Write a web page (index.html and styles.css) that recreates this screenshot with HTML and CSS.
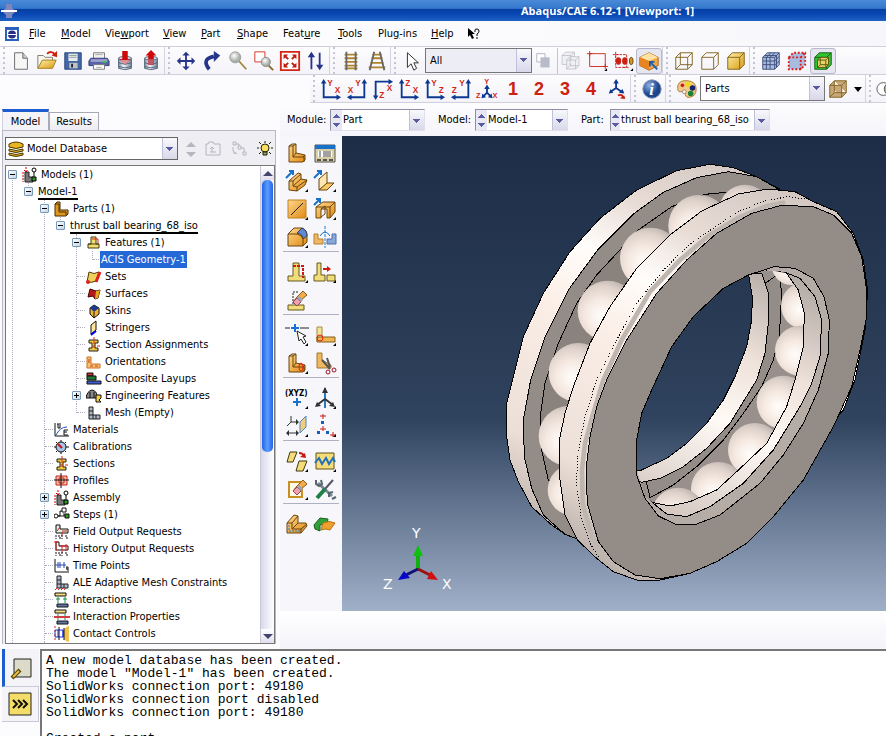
FILE: index.html
```
<!DOCTYPE html>
<html lang="en">

<head>
    <meta charset="UTF-8" />
    <meta name="viewport" content="width=device-width, initial-scale=1.0" />
    <title>Abaqus/CAE 6.12-1 [Viewport: 1]</title>
    <link rel="stylesheet" href="styles.css">
</head>

<body>
    <svg class="sprite" aria-hidden="true">
        <defs>
            <linearGradient id="gold" x2="1" y2="1">
                <stop offset="0" stop-color="#fff0a8" />
                <stop offset="1" stop-color="#d99a10" />
            </linearGradient>
            <linearGradient id="orange" x2="1" y2="1">
                <stop offset="0" stop-color="#ffd890" />
                <stop offset="1" stop-color="#e08a10" />
            </linearGradient>
            <linearGradient id="steel" x2="1" y2="0">
                <stop offset="0" stop-color="#7a8ea6" />
                <stop offset=".4" stop-color="#eef6ff" />
                <stop offset="1" stop-color="#6e8299" />
            </linearGradient>
            <radialGradient id="lens" cx=".4" cy=".35">
                <stop offset="0" stop-color="#fff" />
                <stop offset="1" stop-color="#aab0a8" />
            </radialGradient>
            <radialGradient id="info" cx=".35" cy=".3">
                <stop offset="0" stop-color="#8fb0e0" />
                <stop offset="1" stop-color="#1c4590" />
            </radialGradient>
        </defs>
        <symbol id="cube" viewBox="0 0 24 24">
            <path d="M3 8 8 3h13v13l-5 5H3zM3 8h13v13M16 8l5-5" />
        </symbol>
        <symbol id="wire" viewBox="0 0 24 24">
            <path d="M3 8 8 3h13v13l-5 5H3zM3 8h13v13M16 8l5-5M8 3v13h13M8 16l-5 5" />
        </symbol>
        <symbol id="more" viewBox="0 0 24 24">
            <path d="M23 20v3h-3z" fill="#000" />
        </symbol>
        <symbol id="ell" viewBox="0 0 24 24">
            <path d="M4 5 7 3h4v9l9 2v5l-2 2H4z" fill="url(#orange)" stroke="#6b4510" />
            <path d="M4 5h4v11h11v5M8 5l3-2M8 16l3-4M18 16l2-2" fill="none" stroke="#6b4510" />
        </symbol>
        <symbol id="mesh" viewBox="0 0 16 16">
            <path d="M3 2h4v8h7v4H3zM3 6h4M3 10h4v4M10 10v4" fill="#aeb8c8" stroke="#222" />
        </symbol>
        <symbol id="assembly" viewBox="0 0 16 16">
            <path d="M3 5h4v5h4v5H3z" fill="#777" stroke="#222" />
            <path d="M1 5v10M4 0v5M2 3l2 2 2-2" stroke="#c00" fill="none" stroke-dasharray="2 1" />
            <circle cx="12" cy="3" r="2" fill="#fff" stroke="#000" />
            <path d="M12 5v5" stroke="#000" />
            <path d="M10 10h4v4h-4z" fill="#2a9a2a" stroke="#000" />
        </symbol>
        <symbol id="beam" viewBox="0 0 16 16">
            <path d="M3 3h9v3h-3v5h3v3H3v-3h3V6H3z" fill="#f4c63c" stroke="#222" />
            <path d="M8 0v12M11 9h4" stroke="#d22" stroke-dasharray="3 1" />
        </symbol>
        <symbol id="eraser" viewBox="0 0 24 24">
            <path d="m8 14 4-5 6-6 4 4-7 6-4 4z" fill="#f2ac48" stroke="#8a5a20" />
            <path d="m8 14 4-4 4 4-4 4z" fill="#f0a0b4" stroke="#944" />
            <path d="m12 10 2-2 4 4-2 2z" fill="#9aa4b4" />
        </symbol>
    </svg>

    <header class="titlebar">
        <svg class="app-mark" viewBox="0 0 18 18">
            <path d="M6 2h6v4l4 3-4 4v3H6v-3L2 9l4-3z" fill="#7e86bc" />
            <path d="M1 9h16" stroke="#fff" stroke-width="2" />
        </svg>
        <h1>Abaqus/CAE 6.12-1 [Viewport: 1]</h1>
    </header>

    <nav class="menubar">
        <svg class="doc-mark" viewBox="0 0 14 14">
            <path d="M0 0h14v14H0z" fill="#2b62bd" />
            <path d="M2 3h10v9H2z" fill="#fff" />
            <ellipse cx="7" cy="7.500" rx="4" ry="4" fill="#2a2f86" />
            <path d="M2 7.500h10" stroke="#fff" />
        </svg>
        <button class="m-file"><u>F</u>ile</button>
        <button class="m-model"><u>M</u>odel</button>
        <button class="m-viewport">Vie<u>w</u>port</button>
        <button class="m-view"><u>V</u>iew</button>
        <button class="m-part"><u>P</u>art</button>
        <button class="m-shape"><u>S</u>hape</button>
        <button class="m-feature">Feat<u>u</u>re</button>
        <button class="m-tools"><u>T</u>ools</button>
        <button class="m-plugins">Plu<u>g</u>-ins</button>
        <button class="m-help"><u>H</u>elp</button>
        <button class="m-what" aria-label="What's this"><svg viewBox="0 0 14 14">
                <path d="M1 1v9l2-2 2 4 2-1-2-4h3z" />
                <path d="M8 5V3q0-1 2-1t2 2-2 3v2M10 10v2" fill="none" stroke="#000" />
            </svg></button>
    </nav>

    <div class="toolbar">
        <i class="grip first"></i>
        <button aria-label="New"><svg viewBox="0 0 24 24">
                <path d="M5 3h9l5 6v12H5z" fill="#f6f6f4" stroke="#666" />
                <path d="M14 3v6h5" fill="#ccc" stroke="#666" />
            </svg></button>
        <button aria-label="Open"><svg viewBox="0 0 24 24">
                <path d="M2 20V6h6l2 2h8v5" fill="#f8f6ee" stroke="#776" />
                <path d="m2 20 5-9h15l-4 9z" fill="url(#gold)" stroke="#a07818" />
                <path d="M12 4q5-4 9 1" fill="none" stroke="#d22010" stroke-width="2" />
                <path d="M23 1v7l-6-2z" fill="#d22010" />
            </svg></button>
        <button aria-label="Save"><svg viewBox="0 0 24 24">
                <path d="M3 3h18v18H3z" fill="#4467a4" stroke="#2a4680" />
                <path d="M7 4h10v8H7z" fill="#e8ecec" />
                <path d="M8 6h8M8 8h8" stroke="#899" />
                <path d="M8 14h9v6H8z" fill="#bcc4c4" />
                <path d="M10 15h2v4h-2z" fill="#223" />
            </svg></button>
        <button aria-label="Print"><svg viewBox="0 0 24 24">
                <path d="M6 3h12v7H6z" fill="#f2f2ee" stroke="#777" />
                <path d="M3 9h18l2 3v5H1v-5z" fill="#5a62a6" stroke="#333a80" />
                <path d="M3 10h18v3H3z" fill="#9ba2ce" />
                <path d="M6 16h12v5H6z" fill="#fff" stroke="#777" />
                <path d="M8 5h8M9 19h6" stroke="#aaa" />
                <path d="M16 13h4" stroke="#3c4" stroke-width="2" />
            </svg></button>
        <button aria-label="Save model database"><svg viewBox="0 0 24 24">
                <path d="M5 9v11q7 3 14 0V9z" fill="url(#steel)" stroke="#567" />
                <ellipse cx="12" cy="9" rx="7" ry="2" fill="#cdd8e4" stroke="#567" />
                <path d="M5 14q7 3 14 0M5 18q7 3 14 0" fill="none" stroke="#567" />
                <path d="M9 1h6v9h3l-6 6-6-6h3z" fill="#cc0808" />
                <path d="M7 11h10l-5 5z" fill="#e09098" />
            </svg></button>
        <button aria-label="Load model database"><svg viewBox="0 0 24 24">
                <path d="M5 9v11q7 3 14 0V9z" fill="url(#steel)" stroke="#567" />
                <ellipse cx="12" cy="9" rx="7" ry="2" fill="#cdd8e4" stroke="#567" />
                <path d="M5 14q7 3 14 0M5 18q7 3 14 0" fill="none" stroke="#567" />
                <path d="m12 0 6 6h-3v10H9V6H6z" fill="#cc0808" />
                <path d="M9 10h6v6H9z" fill="#c05868" />
            </svg></button>
        <i class="grip"></i>
        <button aria-label="Pan"><svg viewBox="0 0 24 24" fill="#26348c">
                <path d="M11 5h2v14h-2zM5 11h14v2H5z" />
                <path d="m12 2 4 4H8zM12 22l4-4H8zM2 12l4-4v8zM22 12l-4-4v8z" />
            </svg></button>
        <button aria-label="Rotate"><svg viewBox="0 0 24 24">
                <path d="M9 21Q0 10 14 7" fill="none" stroke="#26348c" stroke-width="4" />
                <path d="M14 1v12l7-7z" fill="#26348c" />
            </svg></button>
        <button aria-label="Zoom"><svg viewBox="0 0 24 24">
                <path d="m13 12 8 9" stroke="#a8843c" stroke-width="2" />
                <circle cx="9" cy="8" r="6" fill="url(#lens)" stroke="#999" />
            </svg></button>
        <button aria-label="Box zoom"><svg viewBox="0 0 24 24">
                <path d="M2 2h11v11H2z" fill="#fff" stroke="#d03020" />
                <path d="m16 16 6 6" stroke="#8a6a30" stroke-width="2" />
                <circle cx="14" cy="13" r="5" fill="url(#lens)" stroke="#888" />
            </svg></button>
        <button aria-label="Fit view"><svg viewBox="0 0 24 24">
                <path d="M2 2h20v20H2z" fill="#fff" stroke="#d42414" stroke-width="2" />
                <path d="m6 6 4 4M18 6l-4 4M6 18l4-4M18 18l-4-4" stroke="#c41c10" stroke-width="2" />
                <path d="M5 5h5l-5 5zM19 5h-5l5 5zM5 19h5l-5-5zM19 19h-5l5-5z" fill="#c41c10" />
            </svg></button>
        <button aria-label="Cycle views"><svg viewBox="0 0 24 24" fill="#26348c">
                <path d="M6 6h2v15H6zM15 3h2v15h-2z" />
                <path d="m7 2 4 6H3zM16 22l4-6h-8z" />
            </svg></button>
        <i class="grip"></i>
        <button aria-label="Perspective off"><svg viewBox="0 0 24 24" fill="none">
                <path d="M5 5h14M5 9h14M5 13h14M5 17h14M5 20h14" stroke="#b08428" stroke-width="2" />
                <path d="M7 2v20M17 2v20" stroke="#666" stroke-width="2" />
            </svg></button>
        <button aria-label="Perspective on"><svg viewBox="0 0 24 24" fill="none">
                <path d="M7 5h10M6 9h12M5 14h14M3 19h18" stroke="#b08428" stroke-width="2" />
                <path d="M9 2 4 22M15 2l5 20" stroke="#666" stroke-width="2" />
            </svg></button>
        <i class="grip"></i>
        <button aria-label="Select"><svg viewBox="0 0 24 24">
                <path d="M7 3v16l4-4 3 7 3-2-3-6h5z" fill="#fff" stroke="#222" />
            </svg></button>
        <select class="combo filter" aria-label="Selection filter">
            <option>All</option>
        </select>
        <button class="divided" aria-label="Highlight"><svg viewBox="0 0 24 24">
                <path d="M3 4h9v9H3z" fill="#fff" stroke="#aeb2c0" />
                <path d="M7 8h10v11H7z" fill="#b8bcc8" />
            </svg></button>
        <button aria-label="Drag mode"><svg class="muted" viewBox="0 0 24 24">
                <use href="#cube" width="18" height="18" />
                <use href="#wire" x="5" y="5" width="18" height="18" />
            </svg></button>
        <button aria-label="Drag rectangle"><svg viewBox="0 0 24 24" fill="none" stroke="#c8281c">
                <path d="M4 4h17v14H4zM1 4h6M4 1v6M18 18h6M21 15v6" />
                <use href="#more" stroke="none" />
            </svg></button>
        <button aria-label="Entities"><svg viewBox="0 0 24 24">
                <path d="M4 5h12v14H4zM1 5h6M4 2v6M12 19h6" fill="none" stroke="#c8281c" stroke-dasharray="3 1" />
                <ellipse cx="7" cy="12" rx="3" ry="4" fill="#cc2010" />
                <ellipse cx="14" cy="12" rx="3" ry="4" fill="#cc2010" />
                <ellipse cx="21" cy="12" rx="2" ry="4" fill="#d89a20" stroke="#641" />
                <use href="#more" />
            </svg></button>
        <button class="pressed" aria-label="Select from exterior"><svg viewBox="0 0 24 24">
                <path d="m2 8 10-5 10 5v9l-10 5-10-5z" fill="#f2a848" stroke="#a06010" />
                <path d="m2 8 10-5 10 5-10 4z" fill="#ffe2a4" />
                <path d="M2 8v9l10 5V12z" fill="#e88420" />
                <path d="m21 21-8-8M13 18v-5h5" fill="none" stroke="#1c60b0" stroke-width="2" />
            </svg></button>
        <i class="grip"></i>
        <button aria-label="Wireframe"><svg class="brown" viewBox="0 0 24 24">
                <use href="#wire" />
            </svg></button>
        <button aria-label="Hidden line"><svg class="brown" viewBox="0 0 24 24">
                <use href="#cube" />
            </svg></button>
        <button aria-label="Shaded"><svg class="brown" viewBox="0 0 24 24">
                <use href="#cube" fill="url(#gold)" />
            </svg></button>
        <i class="grip"></i>
        <button aria-label="Mesh edges"><svg class="slate" viewBox="0 0 24 24">
                <path class="body" d="M3 8 8 3h13v13l-5 5H3z" />
                <path d="M3 8h13v13M7 8v13M11 8v13M3 12h13M3 16h13M7 8l5-5M11 8l5-5M5 6h13v13M16 8l5-5M16 12l5-5M16 17l5-5" />
            </svg></button>
        <button aria-label="Seeds"><svg class="slate seeds" viewBox="0 0 24 24">
                <path class="body" d="M3 8 8 3h13v13l-5 5H3z" />
                <path d="M3 8h13v13M16 8l5-5" />
            </svg></button>
        <button class="pressed" aria-label="Reference representation"><svg viewBox="0 0 24 24">
                <path d="M3 8 8 3h13v13l-5 5H3zM3 8h13v13M16 8l5-5" fill="#30c430" stroke="#155c15" />
                <path d="m6 11 3-3h9v8l-3 3H6z" fill="#e4d468" stroke="#5c5010" />
                <path d="M6 11h9v8M15 11l3-3M9 8v8h9M9 16l-3 3" fill="none" stroke="#5c5010" />
            </svg></button>
    </div>

    <div class="toolbar views">
        <i class="grip first"></i>
        <button aria-label="Front view"><svg class="axes" viewBox="0 0 24 24">
                <path class="line" d="M4 5v16h16" />
                <path d="m4 1 3 5H1zM23 21l-5-3v6z" /><text x="8" y="9">Y</text><text x="16" y="16">X</text>
            </svg></button>
        <button aria-label="Back view"><svg class="axes" viewBox="0 0 24 24">
                <path class="line" d="M20 5v16H5" />
                <path d="m20 1 3 5h-6zM1 21l5-3v6z" /><text x="10" y="9">Y</text><text x="2" y="16">X</text>
            </svg></button>
        <button aria-label="Top view"><svg class="axes" viewBox="0 0 24 24">
                <path class="line" d="M4 20V4h15" />
                <path d="m4 24 3-5H1zM23 4l-5-3v6z" /><text x="16" y="14">X</text><text x="8" y="22">Z</text>
            </svg></button>
        <button aria-label="Bottom view"><svg class="axes" viewBox="0 0 24 24">
                <path class="line" d="M4 5v16h16" />
                <path d="m4 1 3 5H1zM23 21l-5-3v6z" /><text x="8" y="9">Z</text><text x="16" y="16">X</text>
            </svg></button>
        <button aria-label="Left view"><svg class="axes" viewBox="0 0 24 24">
                <path class="line" d="M4 5v16h16" />
                <path d="m4 1 3 5H1zM23 21l-5-3v6z" /><text x="8" y="9">Y</text><text x="16" y="16">Z</text>
            </svg></button>
        <button aria-label="Right view"><svg class="axes" viewBox="0 0 24 24">
                <path class="line" d="M20 5v16H5" />
                <path d="m20 1 3 5h-6zM1 21l5-3v6z" /><text x="10" y="9">Y</text><text x="2" y="16">Z</text>
            </svg></button>
        <button aria-label="Isometric view"><svg class="axes iso" viewBox="0 0 24 24">
                <path class="line" d="M12 11v5l-4 4M12 16l4 4" />
                <path d="m12 7 3 5H9zM6 22l1-5 4 4zM18 22l-1-5-4 4z" /><text x="9" y="7">Y</text><text x="0" y="22">Z</text><text x="18" y="22">X</text>
            </svg></button>
        <button class="num">1</button>
        <button class="num">2</button>
        <button class="num">3</button>
        <button class="num">4</button>
        <button aria-label="Save view"><svg class="axes" viewBox="0 0 24 24">
                <path class="line" d="M11 4v7l-6 4M11 11l6 4" />
                <path d="m11 1 3 5H8zM3 17l2-5 3 4zM20 17l-2-5-4 4z" />
                <path d="M13 19q5-2 6 3" fill="none" stroke="#c41c10" stroke-width="2" />
                <path d="m21 23-6-1 5-3z" fill="#c41c10" />
            </svg></button>
        <i class="grip"></i>
        <button aria-label="Query information"><svg viewBox="0 0 24 24">
                <circle cx="12" cy="12" r="10" fill="url(#info)" stroke="#8494b4" />
                <text class="info-i" x="9" y="18">i</text>
            </svg></button>
        <i class="grip"></i>
        <button aria-label="Color code"><svg viewBox="0 0 24 24">
                <path d="M2 8Q4 2 13 3t9 9-7 9q-4 1-5-3t-5-3-3-7z" fill="#f0c888" stroke="#a87830" />
                <circle cx="7" cy="8" r="2" fill="#d01818" />
                <circle cx="13" cy="7" r="3" fill="#f0d820" />
                <circle cx="18" cy="11" r="3" fill="#182070" />
                <circle cx="16" cy="17" r="3" fill="#188038" />
                <circle cx="9" cy="15" r="2" fill="#fff" stroke="#987" />
            </svg></button>
        <select class="combo color-by" aria-label="Color by">
            <option>Parts</option>
        </select>
        <button aria-label="Translucency"><svg class="brown tan" viewBox="0 0 24 24">
                <use href="#wire" />
            </svg></button>
        <button class="narrow" aria-label="Translucency options"><svg viewBox="0 0 14 24">
                <path d="M3 10h8l-4 5z" />
            </svg></button>
        <i class="grip"></i>
        <button aria-label="Replace"><svg viewBox="0 0 24 24">
                <circle cx="8" cy="12" r="7" fill="#fff" stroke="#555" />
                <circle cx="16" cy="12" r="7" fill="#f0a030" stroke="#555" />
            </svg></button>
    </div>

    <main class="workspace">
        <aside class="side">
            <div class="tabs">
                <button class="tab active">Model</button>
                <button class="tab">Results</button>
            </div>
            <div class="panel">
                <div class="db-row">
                    <span class="db-pick">
                        <svg viewBox="0 0 16 16">
                            <path d="M1 3q7-4 14 0v3q-7 3-14 0zM1 8q7 3 14 0v2q-7 3-14 0zM1 12q7 3 14 0v2q-7 3-14 0z" fill="#e8b420" stroke="#4a3600" />
                        </svg>
                        <select class="combo" aria-label="Database">
                            <option>Model Database</option>
                        </select>
                    </span>
                    <button aria-label="Up or down"><svg viewBox="0 0 16 16" fill="#b4b6c0">
                            <path d="m8 1 5 5H3zM8 16l5-5H3z" />
                        </svg></button>
                    <button aria-label="Parent folder"><svg viewBox="0 0 16 16" fill="none" stroke="#b4b6c0">
                            <path d="M1 14V3h2l1-2h4l1 2h6v11zM5 11h6M7 11V6M5 8l2-2 2 2" />
                        </svg></button>
                    <button aria-label="Expand"><svg viewBox="0 0 16 16" fill="none" stroke="#b4b6c0">
                            <path d="M2 1h3v3H2zM7 5h3v3H7zM12 11h3v3h-3zM5 3h3v2M10 7h3v4M2 6v4l4 3M2 12h3" />
                        </svg></button>
                    <button aria-label="Tips"><svg viewBox="0 0 16 16">
                            <circle cx="8" cy="7" r="4" fill="#f8e060" stroke="#220" />
                            <path d="M6 11h4v3H6z" fill="#8a7" stroke="#220" />
                            <path d="M0 7h2M14 7h2M2 1l2 2M14 1l-2 2M8 0v2M2 13l2-2M14 13l-2-2" stroke="#220" />
                        </svg></button>
                </div>
                <div class="tree-box">
                    <ul class="tree">
                        <li>
                            <div class="row"><button class="toggle open" aria-label="Collapse"></button><svg viewBox="0 0 16 16"><use href="#assembly" /></svg><span>Models (1)</span></div>
                            <ul>
                                <li>
                                    <div class="row"><button class="toggle open" aria-label="Collapse"></button><span class="current">Model-1</span></div>
                                    <ul>
                                        <li>
                                            <div class="row"><button class="toggle open" aria-label="Collapse"></button><svg viewBox="0 0 16 16"><path d="M1 3 3 1h3v8h8v4l-2 2H1z" fill="#e0981c" stroke="#4a2c00" /><path d="M1 3h4v8h7v3" fill="none" stroke="#4a2c00" /></svg><span>Parts (1)</span></div>
                                            <ul>
                                                <li>
                                                    <div class="row"><button class="toggle open" aria-label="Collapse"></button><span class="current">thrust ball bearing_68_iso</span></div>
                                                    <ul>
                                                        <li>
                                                            <div class="row"><button class="toggle open" aria-label="Collapse"></button><svg viewBox="0 0 16 16"><path d="M5 2h5v7h3v4H2V9h3zM2 9h11" fill="#f0dc70" stroke="#443c10" /><path d="M6 4h6v4" fill="none" stroke="#d22" /></svg><span>Features (1)</span></div>
                                                            <ul>
                                                                <li>
                                                                    <div class="row leaf"><i></i><span class="selected">ACIS Geometry-1</span></div>
                                                                </li>
                                                            </ul>
                                                        </li>
                                                        <li>
                                                            <div class="row leaf"><i></i><svg viewBox="0 0 16 16"><path d="M3 3q5 3 10 0l-3 9q-4 2-9 1z" fill="#f0d058" stroke="#4a3c00" /><path d="m14 3-4 10" stroke="#e02020" stroke-width="3" /><circle cx="2" cy="13" r="2" fill="#e02020" /></svg><span>Sets</span></div>
                                                        </li>
                                                        <li>
                                                            <div class="row leaf"><i></i><svg viewBox="0 0 16 16"><path d="m4 3 6 2 4-1-2 8-3 1-2-3-5 1z" fill="#b81818" stroke="#400" /><path d="m10 5 4-1-2 8-3 1z" fill="#e0a820" /></svg><span>Surfaces</span></div>
                                                        </li>
                                                        <li>
                                                            <div class="row leaf"><i></i><svg viewBox="0 0 16 16"><path d="m8 2 5 3v6l-5 4-4-4V5z" fill="#f0b030" stroke="#111" /><path d="m8 2 5 3-5 4-4-4z" fill="#22388c" /><path d="M8 9v6" stroke="#111" /></svg><span>Skins</span></div>
                                                        </li>
                                                        <li>
                                                            <div class="row leaf"><i></i><svg viewBox="0 0 16 16"><path d="m5 5 5-4v9l-5 4z" fill="#ffe69c" stroke="#111" /><path d="m5 15 5-4" stroke="#00f" stroke-width="2" /></svg><span>Stringers</span></div>
                                                        </li>
                                                        <li>
                                                            <div class="row leaf"><i></i><svg viewBox="0 0 16 16"><use href="#beam" /></svg><span>Section Assignments</span></div>
                                                        </li>
                                                        <li>
                                                            <div class="row leaf"><i></i><svg viewBox="0 0 16 16"><path d="M1 3h4v7h9v4H1z" fill="#f8c078" stroke="#c87020" /><path d="M3 5v4M4 12h3M9 12h3" stroke="#c04010" /></svg><span>Orientations</span></div>
                                                        </li>
                                                        <li>
                                                            <div class="row leaf"><i></i><svg viewBox="0 0 16 16"><path d="M1 2h6v3H1z" fill="#d03030" stroke="#111" /><path d="M1 5h9v4H1z" fill="#207838" stroke="#111" /><path d="M1 10h14v3H1z" fill="#4060d8" stroke="#111" /></svg><span>Composite Layups</span></div>
                                                        </li>
                                                        <li>
                                                            <div class="row"><button class="toggle" aria-label="Expand"></button><svg viewBox="0 0 16 16"><path d="M0 10q1-7 6-8 5 1 5 6v2zM4 4v6M8 4v6" fill="#888" stroke="#111" /><path d="M10 7h5v3l-2 2 2 2h-5z" fill="#f4cc48" stroke="#111" /></svg><span>Engineering Features</span></div>
                                                        </li>
                                                        <li>
                                                            <div class="row leaf"><i></i><svg viewBox="0 0 16 16"><use href="#mesh" /></svg><span>Mesh (Empty)</span></div>
                                                        </li>
                                                    </ul>
                                                </li>
                                            </ul>
                                        </li>
                                        <li>
                                            <div class="row leaf"><i></i><svg viewBox="0 0 16 16"><path d="M1 1v13h14M3 2h4M4 2v4h2V3M10 8h4M10 10h3M10 13h4M10 8v5" fill="none" stroke="#111" /><path d="M2 13q4-8 11-8" fill="none" stroke="#2850c0" /></svg><span>Materials</span></div>
                                        </li>
                                        <li>
                                            <div class="row leaf"><i></i><svg viewBox="0 0 16 16"><circle cx="7" cy="8" r="5" fill="#a8c4e8" stroke="#111" /><path d="m4 5 4 4" stroke="#c01010" stroke-width="2" /><path d="M7 1v2M0 8h2M12 8h3M7 13v2M2 3l1 1M12 3l-1 1M2 13l1-1M12 13l-1-1" stroke="#111" /></svg><span>Calibrations</span></div>
                                        </li>
                                        <li>
                                            <div class="row leaf"><i></i><svg viewBox="0 0 16 16"><use href="#beam" /></svg><span>Sections</span></div>
                                        </li>
                                        <li>
                                            <div class="row leaf"><i></i><svg viewBox="0 0 16 16"><path d="M2 3h11v9H2zM5 5h5v5H5z" fill="#f8c0a0" stroke="#c82020" /><path d="M7 0v15M0 7h15" stroke="#111" /></svg><span>Profiles</span></div>
                                        </li>
                                        <li>
                                            <div class="row"><button class="toggle" aria-label="Expand"></button><svg viewBox="0 0 16 16"><use href="#assembly" /></svg><span>Assembly</span></div>
                                        </li>
                                        <li>
                                            <div class="row"><button class="toggle" aria-label="Expand"></button><svg viewBox="0 0 16 16"><path d="M4 9h2V4h3M10 6v3h2M4 9h6" fill="none" stroke="#111" /><circle cx="2" cy="9" r="2" fill="#fff" stroke="#111" /><path d="M8 1h4v4H8z" fill="#fff" stroke="#111" /><path d="M11 7h4v4h-4z" fill="#2a9a2a" stroke="#111" /></svg><span>Steps (1)</span></div>
                                        </li>
                                        <li>
                                            <div class="row leaf"><i></i><svg viewBox="0 0 16 16"><path d="M2 1h4v4h8v4H2z" fill="#e0f0e0" stroke="#111" /><path d="M3 7 6 3M8 7h5M8 8v4" stroke="#c22" /><path d="M2 11v4M4 12h2v3M8 11v4M11 12h2v3" fill="none" stroke="#111" stroke-dasharray="2 1" /></svg><span>Field Output Requests</span></div>
                                        </li>
                                        <li>
                                            <div class="row leaf"><i></i><svg viewBox="0 0 16 16"><path d="M2 1h3v4h9v4H2z" fill="#fff" stroke="#111" /><path d="M0 1h4M2 0v10M5 5h9M12 3v7M8 4v8" stroke="#d22" /><path d="M2 11v4M4 12h2v3M8 11v4M11 12h2v3" fill="none" stroke="#111" stroke-dasharray="2 1" /></svg><span>History Output Requests</span></div>
                                        </li>
                                        <li>
                                            <div class="row leaf"><i></i><svg viewBox="0 0 16 16"><path d="M1 1v13h14M13 8v4h2M12 10h3" fill="none" stroke="#111" /><path d="M1 7h11M4 4v6M6 4v6M10 4v6" stroke="#2848b0" /></svg><span>Time Points</span></div>
                                        </li>
                                        <li>
                                            <div class="row leaf"><i></i><svg viewBox="0 0 16 16"><use href="#mesh" y="-1" /><path d="m1 15 2-2M4 15l2-2M7 15l2-2M10 15l2-2" stroke="#d22" /></svg><span>ALE Adaptive Mesh Constraints</span></div>
                                        </li>
                                        <li>
                                            <div class="row leaf"><i></i><svg viewBox="0 0 16 16"><path d="M1 1h11v3H1z" fill="#f8e080" stroke="#111" /><path d="M3 12h11v3H3z" fill="#6078a8" stroke="#111" /><path d="M4 5v6M11 5v6M2 7h4M9 7h4" stroke="#189048" /></svg><span>Interactions</span></div>
                                        </li>
                                        <li>
                                            <div class="row leaf"><i></i><svg viewBox="0 0 16 16"><path d="M1 1h11v3H1z" fill="#f8e080" stroke="#111" /><path d="M3 12h11v3H3z" fill="#6078a8" stroke="#111" /><path d="M4 5v6M11 5v6" stroke="#189048" /><path d="M0 8h16" stroke="#d04040" stroke-width="2" /></svg><span>Interaction Properties</span></div>
                                        </li>
                                        <li>
                                            <div class="row leaf"><i></i><svg viewBox="0 0 16 16"><path d="M15 0q-6 1-6 8t6 8z" fill="#f0c050" /><path d="M1 4h8v7H1zM4 4v7M9 4v7" fill="none" stroke="#2030e0" /><path d="M1 0v16" stroke="#d22" stroke-dasharray="2 2" /><path d="M5 1v13M10 2v12" stroke="#111" /></svg><span>Contact Controls</span></div>
                                        </li>
                                        <li>
                                            <div class="row leaf"><i></i><svg viewBox="0 0 16 16"><path d="m4 2 4-2M6 5l4-3" stroke="#d22" stroke-width="2" /></svg></div>
                                        </li>
                                    </ul>
                                </li>
                            </ul>
                        </li>
                        <li></li>
                    </ul>
                    <div class="scrollbar">
                        <button class="up" aria-label="Scroll up"></button>
                        <div class="thumb"></div>
                        <button class="down" aria-label="Scroll down"></button>
                    </div>
                </div>
            </div>
        </aside>

        <section class="stage">
            <div class="context">
                <label for="module">Module:</label>
                <span class="spin module"><i></i><select class="combo" id="module">
                        <option>Part</option>
                    </select></span>
                <label for="model">Model:</label>
                <span class="spin model"><i></i><select class="combo" id="model">
                        <option>Model-1</option>
                    </select></span>
                <label for="part">Part:</label>
                <span class="spin part"><i></i><select class="combo" id="part">
                        <option>thrust ball bearing_68_iso</option>
                    </select></span>
            </div>
            <div class="canvas-row">
                <div class="toolbox">
                    <div class="tools">
                        <button aria-label="Create part"><svg viewBox="0 0 24 24"><use href="#ell" /></svg></button>
                        <button aria-label="Part manager"><svg viewBox="0 0 24 24">
                                <path d="M2 4h20v17H2z" fill="#d8d0a4" stroke="#555" />
                                <path d="M2 4h20v4H2z" fill="#1870c8" />
                                <path d="M5 10h14v6H5z" fill="#fff" />
                                <path d="M6 11h2M6 13h2M6 15h2M10 11h8M10 13h8M10 15h8" stroke="#444" />
                                <path d="M4 19h4M10 19h4M16 19h4" stroke="#555" stroke-width="2" />
                            </svg></button>
                        <button aria-label="Solid extrude"><svg viewBox="0 0 24 24">
                                <path d="M4 12 13 4l3 1v5l6 1-2 5-8 6-8-1z" fill="url(#orange)" stroke="#6b4510" />
                                <path d="M4 12h4v5l4 1v4M8 12l8-7M8 17l8-7M12 18l10-7" fill="none" stroke="#6b4510" />
                                <path d="m1 9 7-7M4 2h4v4" fill="none" stroke="#1870c8" stroke-width="2" />
                                <use href="#more" />
                            </svg></button>
                        <button aria-label="Shell extrude"><svg viewBox="0 0 24 24">
                                <path d="m6 10 8-7v12l-8 6z" fill="#ffe8b0" stroke="#6b4510" />
                                <path d="m6 21 8-7h7l-7 7z" fill="#f8c868" stroke="#6b4510" />
                                <path d="m1 9 7-7M4 2h4v4" fill="none" stroke="#1870c8" stroke-width="2" />
                                <use href="#more" />
                            </svg></button>
                        <button aria-label="Wire"><svg viewBox="0 0 24 24">
                                <path d="M3 3h18v18H3z" fill="url(#orange)" stroke="#c08020" />
                                <path d="M6 18 18 6" stroke="#222" />
                                <use href="#more" />
                            </svg></button>
                        <button aria-label="Cut extrude"><svg viewBox="0 0 24 24">
                                <path d="m3 10 7-5h12v10l-5 6h-3v-9H8v9H3z" fill="url(#orange)" stroke="#6b4510" />
                                <path d="M3 10h14v11M17 10l5-5M8 12l4-3v8l-4 3" fill="none" stroke="#6b4510" />
                                <path d="m1 8 6-6M3 2h4v4" fill="none" stroke="#1870c8" stroke-width="2" />
                                <use href="#more" />
                            </svg></button>
                        <button aria-label="Round"><svg viewBox="0 0 24 24">
                                <path d="m3 9 6-6h8q5 2 5 7v7l-4 4H3z" fill="url(#orange)" stroke="#6b4510" />
                                <path d="m12 8 5-5q5 2 5 8l-4 3q0-5-6-6z" fill="#6088d8" stroke="#345" />
                                <path d="M3 9h9q5 1 6 5v7" fill="none" stroke="#6b4510" />
                                <use href="#more" />
                            </svg></button>
                        <button aria-label="Mirror"><svg viewBox="0 0 24 24">
                                <path d="M1 9h4v5h5v5H1z" fill="#f0b860" stroke="#b88030" />
                                <path d="M23 9h-4v5h-5v5h9z" fill="#88a8d8" stroke="#5070a8" />
                                <path d="M12 1v22" stroke="#1880d0" stroke-dasharray="3 1" />
                                <path d="M7 11q5-8 10 0" fill="none" stroke="#1870c8" />
                            </svg></button>
                    </div>
                    <div class="tools">
                        <button aria-label="Edit feature"><svg viewBox="0 0 24 24">
                                <path d="M8 3h6v13h6v5H3v-5h5z" fill="#f0dc78" stroke="#665820" />
                                <path d="M8 6h10v12" fill="none" stroke="#d01810" stroke-width="2" stroke-dasharray="3 1" />
                                <use href="#more" />
                            </svg></button>
                        <button aria-label="Regenerate"><svg viewBox="0 0 24 24">
                                <path d="M4 3h4v12h4v6H1v-6h3zM14 15h8v6h-8z" fill="#f0dc78" stroke="#665820" />
                                <path d="M10 9h5" stroke="#d01810" stroke-width="2" />
                                <path d="m18 9-4-3v6z" fill="#d01810" />
                                <use href="#more" />
                            </svg></button>
                        <button aria-label="Delete feature"><svg viewBox="0 0 24 24">
                                <path d="M3 17h16v5H3z" fill="#f0dc78" stroke="#665820" />
                                <path d="M8 16V4h6" fill="none" stroke="#222" stroke-dasharray="2 1" />
                                <use href="#eraser" />
                            </svg></button>
                    </div>
                    <div class="tools">
                        <button aria-label="Partition edge"><svg viewBox="0 0 24 24">
                                <path d="M0 5h5M15 5h9" stroke="#222" />
                                <path d="M10 1v8M6 5h8" stroke="#1870d0" stroke-width="2" />
                                <path d="m12 8 9 5-3 1 3 5-2 2-3-5-2 2z" fill="#fff" stroke="#222" />
                                <use href="#more" />
                            </svg></button>
                        <button aria-label="Partition face"><svg viewBox="0 0 24 24">
                                <path d="M4 4h5v10l-5 5z" fill="#f4e494" stroke="#a08c40" />
                                <path d="M4 19v-5h18v5z" fill="#f0b450" stroke="#806020" />
                                <circle cx="7" cy="15" r="3" fill="none" stroke="#e02010" />
                                <use href="#more" />
                            </svg></button>
                        <button aria-label="Partition cell"><svg viewBox="0 0 24 24">
                                <use href="#ell" />
                                <ellipse cx="16" cy="16" rx="2" ry="4" fill="none" stroke="#e02010" />
                                <use href="#more" />
                            </svg></button>
                        <button aria-label="Repair"><svg viewBox="0 0 24 24">
                                <path d="M4 2h5v7l9 5v3H4z" fill="#f0b860" stroke="#a07830" />
                                <path d="m9 9 8 9M14 7l3 9" stroke="#555" stroke-width="2" />
                                <circle cx="15" cy="21" r="2" fill="none" stroke="#a01020" />
                                <circle cx="21" cy="19" r="2" fill="none" stroke="#a01020" />
                            </svg></button>
                    </div>
                    <div class="tools">
                        <button aria-label="Datum point"><svg viewBox="0 0 24 24">
                                <text class="xyz" x="0" y="10">(XYZ)</text>
                                <path d="M12 12v8M8 16h8" stroke="#1870d0" stroke-width="2" />
                                <use href="#more" />
                            </svg></button>
                        <button aria-label="Datum axis"><svg viewBox="0 0 24 24">
                                <path d="M12 2v20" stroke="#2878c8" stroke-width="2" />
                                <path d="M12 13 4 19M12 13l8 6" stroke="#333" stroke-width="2" />
                                <path d="m12 1 3 6H9zM2 21l2-5 4 4zM22 21l-2-5-4 4z" fill="#333" />
                                <use href="#more" />
                            </svg></button>
                        <button aria-label="Datum plane"><svg viewBox="0 0 24 24">
                                <path d="m15 8 6-6v11l-6 6z" fill="#f4cc80" stroke="#4888c8" />
                                <path d="M6 2v6l-4 4M6 8h6M3 19h10" fill="none" stroke="#333" />
                                <path d="m1 19 3-3v6zM14 19l-3-3v6zM14 8l-3-3v6z" fill="#333" />
                                <use href="#more" />
                            </svg></button>
                        <button aria-label="Datum coordinates"><svg viewBox="0 0 24 24">
                                <path d="M10 0v5M7 2h6M10 12v5M7 15h6M17 21h6M20 18v5" stroke="#d01810" />
                                <path d="M8 7h3v3H8zM4 17h3v3H4zM13 17h3v3h-3z" fill="#1060c0" />
                                <use href="#more" />
                            </svg></button>
                    </div>
                    <div class="tools">
                        <button aria-label="Edit geometry"><svg viewBox="0 0 24 24">
                                <path d="M5 3h7L8 13H2zM14 12h8l-4 10h-7z" fill="#f4dc78" stroke="#403810" />
                                <path d="M14 4q4 0 5 3" fill="none" stroke="#c81810" stroke-width="2" />
                                <path d="m21 9-6-1 5-4z" fill="#c81810" />
                                <use href="#more" />
                            </svg></button>
                        <button aria-label="Stitch"><svg viewBox="0 0 24 24">
                                <path d="M3 4h18v16H3z" fill="#f4dc78" stroke="#605010" />
                                <path d="m2 14 4-5 3 6 4-6 3 6 4-6 2 4" fill="none" stroke="#2070c0" stroke-width="2" />
                                <use href="#more" />
                            </svg></button>
                        <button aria-label="Remove faces"><svg viewBox="0 0 24 24">
                                <path d="M4 5h13v15H4z" fill="#fffbe8" stroke="#c89020" stroke-width="2" />
                                <use href="#eraser" />
                                <use href="#more" />
                            </svg></button>
                        <button aria-label="Tools"><svg viewBox="0 0 24 24">
                                <path d="m5 6 14 13" stroke="#7a8894" stroke-width="3" />
                                <path d="M3 3v4l3 2 3-2-1-4M16 20v-4l4-1M19 22l4-2" fill="none" stroke="#566470" stroke-width="2" />
                                <path d="m12 12 8-9" stroke="#556" stroke-width="2" />
                                <path d="m4 21 8-9" stroke="#208048" stroke-width="4" />
                            </svg></button>
                    </div>
                    <div class="tools last">
                        <button aria-label="Assign midsurface"><svg viewBox="0 0 24 24">
                                <path d="M2 11 9 3l4 1v7h8l1 3-6 7H2z" fill="url(#orange)" stroke="#6b4510" />
                                <path d="M2 11h5v6h9v4M7 11l6-7M7 17l6-6M16 17l6-5" fill="none" stroke="#6b4510" />
                                <path d="M4 13v6h11l5-5" fill="none" stroke="#2880d0" stroke-dasharray="2 1" />
                            </svg></button>
                        <button aria-label="Offset faces"><svg viewBox="0 0 24 24">
                                <path d="m1 13 6-7 8 1-1 5-7 1v6l-5-2z" fill="#30a038" stroke="#186020" />
                                <path d="M10 11q6-3 12 0l-5 7q-4-2-9 0z" fill="#f0a030" stroke="#b87010" />
                            </svg></button>
                    </div>
                </div>

                <div class="viewport">
                    <svg class="scene" viewBox="342 136 544 474">
                        <defs>
                            <linearGradient id="backdrop" gradientUnits="userSpaceOnUse" x1="0" y1="-42" x2="0" y2="1380">
                                <stop offset="0" stop-color="#1d2d48" />
                                <stop offset=".5" stop-color="#2c3e58" />
                                <stop offset=".6" stop-color="#304460" />
                                <stop offset="1" stop-color="#a1b0c9" />
                            </linearGradient>
                            <linearGradient id="rim" gradientUnits="userSpaceOnUse" x1="800" y1="60" x2="200" y2="1200">
                                <stop offset="0" stop-color="#d2c8c1" />
                                <stop offset=".2" stop-color="#e8dcd5" />
                                <stop offset=".34" stop-color="#fffdfb" />
                                <stop offset=".5" stop-color="#fbeee6" />
                                <stop offset=".8" stop-color="#ecdfd7" />
                                <stop offset="1" stop-color="#b5aba5" />
                            </linearGradient>
                            <linearGradient id="bore" gradientUnits="userSpaceOnUse" x1="900" y1="370" x2="560" y2="1110">
                                <stop offset="0" stop-color="#b3aaa5" />
                                <stop offset=".35" stop-color="#eee2da" />
                                <stop offset=".6" stop-color="#fffaf5" />
                                <stop offset="1" stop-color="#d3c7bf" />
                            </linearGradient>
                            <radialGradient id="ball" cx=".4" cy=".58" r=".66">
                                <stop offset="0" stop-color="#fffdfb" />
                                <stop offset=".4" stop-color="#f6eae3" />
                                <stop offset=".75" stop-color="#ddd1ca" />
                                <stop offset="1" stop-color="#b9aea8" />
                            </radialGradient>
                            <clipPath id="bore-clip">
                                <path d="M853 363 890 370 925 420 943 490 940 590 915 690 890 770 830 880 740 965 680 1020 600 1055 540 1068 490 1058 465 1040 440 960V360z" />
                            </clipPath>
                            <clipPath id="hole-clip">
                                <path id="hole" d="M853 350 915 355 970 385 1002 440 1018 510 1015 610 985 720 940 820 880 915 810 1000 690 1095 620 1122 555 1122 505 1098 465 1045 440 975 440 870 455 790 485 720 545 590 610 500 700 415 775 375z" />
                            </clipPath>
                        </defs>
                        <svg x="490" y="150" width="396" height="480" viewBox="0 0 1188 1440">
                            <path d="M870 118 800 80 730 53 660 43 560 62 440 120 330 205 240 305 160 430 100 560 65 700 50 760V860L60 930 85 995 125 1070 185 1125 225 1153 265 1168 600 1000z" fill="url(#rim)" class="edge" />
                            <path d="M870 120 800 80 715 65 620 83 520 127 430 192 325 297 235 420 165 560 122 690 100 810 103 920 125 1015 160 1095 225 1153 265 1168 600 800z" fill="#948c87" class="edge" />
                            <path d="M710 127 645 133 545 170 445 240 320 375 260 460 205 580 165 700 152 790 155 900 175 990 300 1000 600 500z" fill="#8a827d" class="edge" />
                            <g fill="url(#ball)">
                                <circle cx="765" cy="182" r="78" />
                                <circle cx="627" cy="227" r="92" />
                                <circle cx="482" cy="325" r="92" />
                                <circle cx="353" cy="482" r="90" />
                                <circle cx="265" cy="668" r="89" />
                                <circle cx="236" cy="858" r="90" />
                                <circle cx="250" cy="1020" r="77" />
                            </g>
                            <path d="M970 155 915 125 835 117 745 132 635 183 540 255 440 355 360 470 300 580 250 710 225 790 208 870 210 990 225 1095 262 1170 320 1225 370 1265 440 1290 510 1290 600 1270 1060 780 1095 690 1125 540 1133 420 1120 330 1090 250 1040 185z" fill="url(#rim)" class="edge" />
                            <path d="M880 158 830 168 745 203 655 258 570 330 480 425 395 570 340 690 307 800 285 880 276 960 278 1060 305 1160 350 1226 400 1262" class="fillet" />
                            <path d="M945 147 895 140 825 152 740 187 600 282 520 360 440 460 380 570 320 690 285 800 262 920 260 1010 275 1110 300 1180 330 1228" class="edge dots" />
                            <path d="M875 166 785 190 680 250 590 330 500 430 410 570 350 690 320 770 300 860 288 960 292 1060 325 1175 370 1235 435 1275 510 1286 600 1270 680 1235 770 1180 850 1100 940 990 1030 830 1085 710 1110 600 1130 500V420L1115 320 1085 250 1030 195 970 170z" fill="#948c87" class="edge" />
                            <g clip-path="url(#hole-clip)">
                                <path d="M440 340h600v800H440z" fill="#b5aca6" />
                                <path d="M830 363 885 367 930 385 975 440 995 510 990 620 965 700 930 770 850 900 760 1000 660 1070 590 1100 530 1092 490 1060 465 1030 400 800z" fill="url(#bore)" class="edge" />
                                <g clip-path="url(#bore-clip)">
                                    <path d="M440 340h520v740H440z" fill="#99908b" />
                                    <path d="M868 370 875 430 868 560 850 630 815 710 760 790 700 870 620 950 550 1005 480 1043 400 700z" fill="#948c87" class="edge" />
                                    <g fill="url(#ball)">
                                        <circle cx="905" cy="345" r="60" />
                                        <circle cx="943" cy="467" r="70" />
                                        <circle cx="930" cy="602" r="75" />
                                        <circle cx="880" cy="757" r="80" />
                                        <circle cx="795" cy="900" r="81" />
                                        <circle cx="685" cy="1018" r="82" />
                                        <circle cx="565" cy="1093" r="80" />
                                    </g>
                                    <path d="M815 370 835 430 835 520 825 610 800 690 720 820 650 895 580 950 510 985 455 997 400 980 400 370z" fill="url(#bore)" class="edge" />
                                </g>
                                <path d="M890 370 925 420 943 490 940 590 915 690 890 770 830 880 740 965 680 1020 600 1055 540 1068 490 1058" class="edge hollow" />
                                <path d="M775 370 787 440 785 510 770 590 735 680 700 750 650 820 590 880 530 925 450 962 400 960 400 370z" fill="url(#backdrop)" class="edge" />
                            </g>
                            <use href="#hole" class="edge hollow" />
                        </svg>
                        <g class="triad">
                            <path d="M418 570v-14" stroke="#10b010" stroke-width="4" />
                            <path d="m418 545 5 11h-10z" fill="#10c010" />
                            <path d="m418 569 12 6" stroke="#a01010" stroke-width="3" />
                            <path d="m438 580-11-1 4-8z" fill="#d01010" />
                            <path d="m418 569-12 6" stroke="#10107a" stroke-width="3" />
                            <path d="m398 580 6-9 6 7z" fill="#0808c8" />
                            <text x="412" y="538">Y</text>
                            <text x="383" y="589">Z</text>
                            <text x="442" y="589">X</text>
                        </g>
                    </svg>
                </div>
            </div>
            <div class="prompt"></div>
        </section>
    </main>

    <footer class="messages">
        <div class="message-tabs">
            <button class="active" aria-label="Message area"><svg viewBox="0 0 24 24">
                    <path d="M4 3h17v18H4z" fill="#dcdac8" stroke="#222" />
                    <path d="m2 22 8-8" stroke="#5a4400" stroke-width="4" />
                    <path d="m3 21 6-6" stroke="#e8c040" stroke-width="2" />
                </svg></button>
            <button aria-label="Command line"><svg viewBox="0 0 24 24">
                    <path d="M1 1h22v22H1z" fill="#f4dc68" stroke="#222" />
                    <path d="m5 8 4 4-4 4M10 8l4 4-4 4M15 8l4 4-4 4" fill="none" stroke="#111" stroke-width="2" />
                </svg></button>
        </div>
        <pre role="log">A new model database has been created.
The model "Model-1" has been created.
SolidWorks connection port: 49180
SolidWorks connection port disabled
SolidWorks connection port: 49180

Created a part</pre>
    </footer>
</body>

</html>
```
FILE: styles.css
```
* {
    box-sizing: border-box;
}

body {
    margin: 0;
    height: 100vh;
    display: flex;
    flex-direction: column;
    overflow: hidden;
    background: #fcfcfe;
    color: #000;
    font: 11px/17px "DejaVu Sans Condensed", "DejaVu Sans", sans-serif;
}

button,
select {
    margin: 0;
    padding: 0;
    border: 0;
    border-radius: 0;
    background: none;
    color: inherit;
    font: inherit;
}

svg {
    display: block;
    flex: none;
}

.sprite {
    position: absolute;
    width: 0;
    height: 0;
}

/* title and menu */
.titlebar {
    flex: none;
    height: 21px;
    display: flex;
    align-items: center;
    background: linear-gradient(#4a8ad8, #3577cc 40%, #0640a4 45%, #0a48b4 70%, #1f62c4);
    color: #fff;
}

.app-mark {
    width: 18px;
    height: 18px;
}

.titlebar h1 {
    margin: 0 0 0 503px;
    font: bold 11px/20px "Open Sans", sans-serif;
    white-space: nowrap;
}

.menubar {
    flex: none;
    height: 26px;
    display: flex;
    align-items: center;
    border-bottom: 1px solid #d0d0dc;
    background: linear-gradient(90deg, #fff, #f7f7fb);
}

.menubar button {
    text-align: left;
    white-space: nowrap;
}

.doc-mark {
    width: 14px;
    height: 14px;
    margin: 0 10px 0 5px;
}

.m-file { width: 32px; }
.m-model { width: 44px; }
.m-viewport { width: 58px; }
.m-view { width: 38px; }
.m-part { width: 36px; }
.m-shape { width: 46px; }
.m-feature { width: 55px; }
.m-tools { width: 40px; }
.m-plugins { width: 53px; }
.m-help { width: 36px; }

.m-what svg {
    width: 14px;
    height: 14px;
}

/* toolbars */
.toolbar {
    flex: none;
    height: 28px;
    display: flex;
    align-items: center;
    overflow: hidden;
    border-bottom: 1px solid #d0d0dc;
    background: linear-gradient(#fdfdfe, #f3f3f9);
}

.toolbar button {
    flex: none;
    width: 26px;
    height: 26px;
    display: flex;
    align-items: center;
    justify-content: center;
}

.toolbar svg {
    width: 22px;
    height: 22px;
}

.toolbar .narrow {
    width: 14px;
}

.toolbar .narrow svg {
    width: 14px;
    height: 24px;
}

.toolbar .pressed {
    border: 1px solid #b8b8d0;
    border-radius: 3px;
    background: #e6e6f0;
}

.toolbar .divided {
    border-right: 1px solid #c4c4d0;
}

.toolbar .num {
    color: #cc2010;
    font: bold 18px/24px "Liberation Sans", sans-serif;
}

.views {
    margin-left: 310px;
}

.grip {
    flex: none;
    width: 9px;
    height: 28px;
    border-left: 1px solid #d4d4e0;
    background: linear-gradient(#c4c4d2 2px, transparent 0) 3px 5px / 2px 5px repeat-y;
}

.grip.first {
    width: 8px;
    border-left: 0;
}

.muted {
    fill: #f0f0f4;
    stroke: #b4b6c2;
}

.brown {
    fill: none;
    stroke: #80601c;
}

.tan {
    fill: #c8a878;
}

.slate {
    fill: none;
    stroke: #3c4c78;
}

.slate .body {
    fill: #a8bce0;
}

.seeds {
    stroke: #e01818;
    stroke-width: 2;
    stroke-dasharray: 2 2;
}

.axes {
    fill: #0c3890;
}

.axes .line {
    fill: none;
    stroke: #0c3890;
    stroke-width: 2;
}

.axes text {
    fill: #d02818;
    font: bold 9px "Liberation Sans", sans-serif;
}

.iso text {
    font-size: 8px;
}

.info-i {
    fill: #fff;
    font: italic bold 18px "Liberation Serif", serif;
}

/* drop-downs */
.combo {
    flex: none;
    appearance: none;
    height: 22px;
    padding: 0 20px 0 4px;
    background:
        linear-gradient(#5a5aa0, #5a5aa0) right 4px top 9px / 7px 1px no-repeat,
        linear-gradient(#5a5aa0, #5a5aa0) right 5px top 10px / 5px 1px no-repeat,
        linear-gradient(#5a5aa0, #5a5aa0) right 6px top 11px / 3px 1px no-repeat,
        linear-gradient(#5a5aa0, #5a5aa0) right 7px top 12px / 1px 1px no-repeat,
        linear-gradient(#c0c0dc, #c0c0dc) right 14px top 0 / 1px 24px no-repeat,
        linear-gradient(#f8f8fc, #d8d8ea) right / 15px 100% no-repeat,
        #fff;
}

.filter,
.color-by {
    height: 25px;
    border: 1px solid #777;
}

.filter {
    width: 107px;
    background-color: #ededf5;
}

.color-by {
    width: 125px;
}

/* model tree panel */
.workspace {
    flex: 1;
    min-height: 0;
    display: flex;
}

.side {
    flex: none;
    width: 280px;
    padding: 7px 4px 5px 2px;
    display: flex;
    flex-direction: column;
}

.tabs {
    flex: none;
    display: flex;
    align-items: flex-end;
    height: 20px;
}

.tab {
    width: 50px;
    height: 18px;
    border: 1px solid #a8a8b8;
    border-bottom: 0;
    background: linear-gradient(#fff, #ebebf0);
}

.tab.active {
    width: 47px;
    height: 21px;
    border-top: 3px solid #1c5cd0;
    border-left-color: #d0d0dc;
    background: #f4f4f8;
}

.panel {
    flex: 1;
    min-height: 0;
    display: flex;
    flex-direction: column;
    border: 1px solid #b8b8c8;
    border-bottom: 0;
    background: #eeeef3;
}

.db-row {
    flex: none;
    display: flex;
    align-items: center;
    gap: 9px;
    padding: 6px 2px 5px;
}

.db-row button svg {
    width: 16px;
    height: 16px;
}

.db-pick {
    width: 173px;
    display: flex;
    align-items: center;
    border: 1px solid #666;
    background: #fff;
}

.db-pick svg {
    width: 16px;
    height: 16px;
    margin-left: 2px;
}

.db-pick .combo {
    flex: 1;
    padding-left: 3px;
    height: 21px;
}

.db-row button {
    width: 16px;
}

.db-row button + button {
    margin-left: 1px;
}

.db-row button:first-of-type {
    margin-left: -4px;
    margin-right: -4px;
}

.tree-box {
    flex: 1;
    min-height: 0;
    margin-left: 2px;
    display: flex;
    border: 1px solid #777;
    background: #fff;
}

.tree {
    flex: 1;
    overflow: hidden;
}

.tree,
.tree ul {
    margin: 0;
    padding: 0;
    list-style: none;
}

.tree ul {
    padding-left: 16px;
}

.tree li {
    position: relative;
}

.tree li::before {
    content: "";
    position: absolute;
    left: 6px;
    top: 0;
    bottom: 0;
    border-left: 1px dotted #b0b0c0;
}

.tree li:last-child::before {
    bottom: auto;
    height: 9px;
}

.tree > li:first-child::before {
    top: 9px;
}

.row {
    position: relative;
    height: 17px;
    display: flex;
    align-items: center;
    white-space: nowrap;
}

.row svg {
    width: 16px;
    height: 16px;
    margin-right: 3px;
}

.row i {
    width: 8px;
    margin: 0 1px 0 7px;
    border-top: 1px dotted #b0b0c0;
}

.toggle {
    flex: none;
    width: 9px;
    height: 9px;
    margin: 0 5px 0 2px;
    border: 1px solid #7898b8;
    border-radius: 1px;
    background:
        linear-gradient(#000, #000) center / 5px 1px no-repeat,
        linear-gradient(#000, #000) center / 1px 5px no-repeat,
        linear-gradient(135deg, #fff, #c4d4e4);
}

.toggle.open {
    background:
        linear-gradient(#000, #000) center / 5px 1px no-repeat,
        linear-gradient(135deg, #fff, #c4d4e4);
}

.current {
    height: 17px;
    border-bottom: 2px solid #000;
}

.selected {
    margin-left: -2px;
    padding: 0 1px;
    background: #2468d8;
    color: #fff;
}

.scrollbar {
    flex: none;
    width: 14px;
    display: flex;
    flex-direction: column;
    border-left: 1px solid #c8c8d8;
    background: linear-gradient(90deg, #d8d8ec, #fff);
}

.scrollbar button {
    height: 14px;
    background: linear-gradient(#fff, #e0e0ee);
}

.scrollbar button::before {
    content: "";
    display: block;
    width: 0;
    margin: 0 auto;
    border: 5px solid transparent;
}

.scrollbar .up::before {
    border-top: 0;
    border-bottom-color: #44446c;
}

.scrollbar .down::before {
    border-bottom: 0;
    border-top-color: #44446c;
}

.thumb {
    height: 57%;
    margin: 0 1px auto;
    border-radius: 5px;
    background: linear-gradient(90deg, #2464e0, #5c9cff 50%, #2464e8);
}

/* module bar, toolbox and viewport */
.stage {
    flex: 1;
    min-width: 0;
    display: flex;
    flex-direction: column;
    background: #f7f7fb;
}

.context {
    flex: none;
    height: 33px;
    display: flex;
    align-items: center;
    padding-left: 7px;
    background: linear-gradient(#fdfdfe, #f4f4fa);
}

.context label {
    width: 43px;
}

.spin {
    display: flex;
    border: 1px solid #a0a0b0;
    border-color: #9090a4 #e0e0ec #e0e0ec #9090a4;
}

.spin i {
    width: 11px;
    height: 20px;
    background:
        conic-gradient(from 135deg at 50% 0, #5c5ca4 90deg, transparent 0) center 4px / 7px 4px no-repeat,
        conic-gradient(from -45deg at 50% 100%, #5c5ca4 90deg, transparent 0) center 13px / 7px 4px no-repeat,
        #e8e8f4;
}

.spin .combo {
    flex: 1;
    height: 20px;
    padding-left: 1px;
}

.module { width: 95px; margin-right: 13px; }
.model { width: 93px; margin-right: 13px; }
.part { width: 160px; }

.context label[for="model"] { width: 37px; }
.context label[for="part"] { width: 29px; }

.canvas-row {
    flex: 1;
    min-height: 0;
    display: flex;
}

.toolbox {
    flex: none;
    width: 62px;
    padding: 3px 3px 0;
}

.tools {
    display: grid;
    grid-template-columns: 28px 28px;
    grid-auto-rows: 28px;
    margin-bottom: 6px;
    border-bottom: 1px solid #b0b0c4;
}

.tools.last {
    border-bottom: 0;
}

.tools button {
    display: flex;
    align-items: center;
    justify-content: center;
}

.tools svg {
    width: 24px;
    height: 24px;
}

.xyz {
    font: bold 8px "DejaVu Sans Condensed", sans-serif;
}

.viewport {
    flex: 1;
    min-width: 0;
    overflow: hidden;
    background: linear-gradient(#1d2d48, #2c3e58 50%, #304460 60%, #a1b0c9);
}

.scene {
    width: 544px;
    height: 474px;
}

.edge {
    stroke: #000;
    stroke-width: 3;
    shape-rendering: crispEdges;
}

.hollow,
.dots,
.fillet {
    fill: none;
}

.dots {
    stroke-dasharray: 3 6;
}

.fillet {
    stroke: #c0b6b0;
    stroke-width: 14;
    stroke-linecap: round;
}

.triad text {
    fill: #fff;
    font: 14px "DejaVu Sans", sans-serif;
}

.prompt {
    flex: none;
    height: 38px;
    background: linear-gradient(#fff, #f3f3fa);
}

/* message area */
.messages {
    flex: none;
    height: 87px;
    display: flex;
    overflow: hidden;
}

.message-tabs {
    flex: none;
    width: 40px;
    padding-left: 2px;
}

.message-tabs button {
    width: 37px;
    height: 35px;
    display: flex;
    align-items: center;
    justify-content: center;
    border: 1px solid #c8c8d8;
    border-width: 0 1px 1px 0;
    background: #f4f4f8;
}

.message-tabs .active {
    height: 38px;
    border-left: 3px solid #1c5cd0;
    border-right: 0;
}

.message-tabs svg {
    width: 24px;
    height: 24px;
}

.messages pre {
    flex: 1;
    margin: 0;
    padding: 3px 4px;
    border: solid #777;
    border-width: 2px 0 0 2px;
    background: #fff;
    font: 13px/13px "Liberation Mono", monospace;
}
```
